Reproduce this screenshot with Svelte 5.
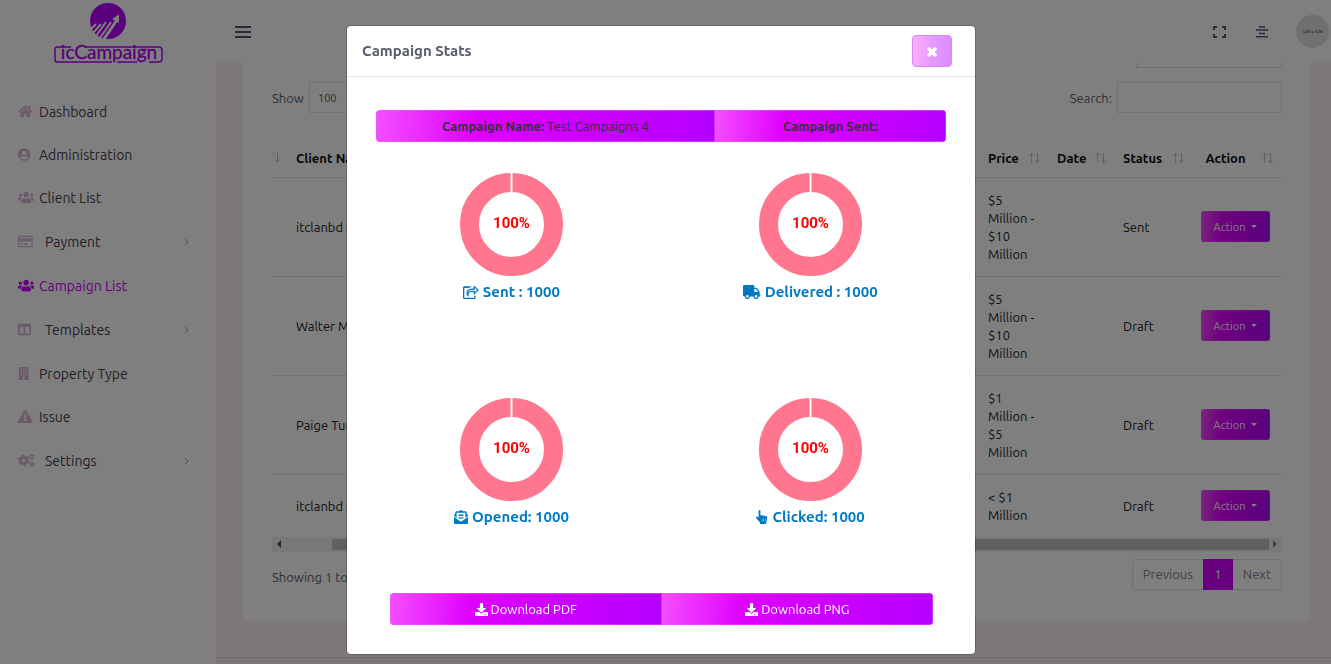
<script>
  let search = '';
  let filter = '';
  let pageSize = '100';
  let showStats = true;

  const icons = {
    home: { w: 576, d: 'M280.37 148.26L96 300.11V464a16 16 0 0 0 16 16l112.06-.29a16 16 0 0 0 15.92-16V368a16 16 0 0 1 16-16h64a16 16 0 0 1 16 16v95.64a16 16 0 0 0 16 16.05L464 480a16 16 0 0 0 16-16V300L295.67 148.26a12.19 12.19 0 0 0-15.3 0zM571.6 251.47L488 182.56V44.05a12 12 0 0 0-12-12h-56a12 12 0 0 0-12 12v72.61L318.47 43a48 48 0 0 0-61 0L4.34 251.47a12 12 0 0 0-1.6 16.9l25.5 31A12 12 0 0 0 45.15 301l235.22-193.74a12.19 12.19 0 0 1 15.3 0L530.9 301a12 12 0 0 0 16.9-1.6l25.5-31a12 12 0 0 0-1.7-16.93z' },
    user: { w: 496, d: 'M248 8C111 8 0 119 0 256s111 248 248 248 248-111 248-248S385 8 248 8zm0 96c48.6 0 88 39.4 88 88s-39.4 88-88 88-88-39.4-88-88 39.4-88 88-88zm0 344c-58.7 0-111.3-26.6-146.5-68.2 18.8-35.4 55.6-59.8 98.5-59.8 2.4 0 4.8.4 7.1 1.1 13 4.2 26.6 6.9 40.9 6.9 14.3 0 28-2.7 40.9-6.9 2.3-.7 4.7-1.1 7.1-1.1 42.9 0 79.7 24.4 98.5 59.8C359.3 421.4 306.7 448 248 448z' },
    users: { w: 640, d: 'M96 224c35.3 0 64-28.7 64-64s-28.7-64-64-64-64 28.7-64 64 28.7 64 64 64zm448 0c35.3 0 64-28.7 64-64s-28.7-64-64-64-64 28.7-64 64 28.7 64 64 64zm32 32h-64c-17.6 0-33.5 7.1-45.1 18.6 40.3 22.1 68.9 62 75.1 109.4h66c17.7 0 32-14.3 32-32v-32c0-35.3-28.7-64-64-64zm-256 0c61.9 0 112-50.1 112-112S381.9 32 320 32 208 82.1 208 144s50.1 112 112 112zm76.8 32h-8.3c-20.8 10-43.9 16-68.5 16s-47.6-6-68.5-16h-8.3C179.6 288 128 339.6 128 403.2V432c0 26.5 21.5 48 48 48h288c26.5 0 48-21.5 48-48v-28.8c0-63.6-51.6-115.2-115.2-115.2zm-223.7-13.4C161.5 263.1 145.6 256 128 256H64c-35.3 0-64 28.7-64 64v32c0 17.7 14.3 32 32 32h65.9c6.3-47.4 34.9-87.3 75.2-109.4z' },
    card: { w: 576, d: 'M527.9 32H48.1C21.5 32 0 53.5 0 80v352c0 26.5 21.5 48 48.1 48h479.8c26.6 0 48.1-21.5 48.1-48V80c0-26.5-21.5-48-48.1-48zM54.1 80h467.8c3.3 0 6 2.7 6 6v42H48.1V86c0-3.3 2.7-6 6-6zm467.8 352H54.1c-3.3 0-6-2.7-6-6V256h479.8v170c0 3.3-2.7 6-6 6zM192 332v40c0 6.6-5.4 12-12 12h-72c-6.6 0-12-5.4-12-12v-40c0-6.6 5.4-12 12-12h72c6.6 0 12 5.4 12 12zm192 0v40c0 6.6-5.4 12-12 12H236c-6.6 0-12-5.4-12-12v-40c0-6.6 5.4-12 12-12h136c6.6 0 12 5.4 12 12z' },
    columns: { w: 512, d: 'M464 32H48C21.49 32 0 53.49 0 80v352c0 26.51 21.49 48 48 48h416c26.51 0 48-21.49 48-48V80c0-26.51-21.49-48-48-48zM224 416H64V160h160v256zm224 0H288V160h160v256z' },
    building: { w: 448, d: 'M436 480h-20V24c0-13-11-24-24-24H56C43 0 32 11 32 24v456H12c-7 0-12 5-12 12v20h448v-20c0-7-5-12-12-12zM104 80h56v56h-56zM196 80h56v56h-56zM288 80h56v56h-56zM104 176h56v56h-56zM196 176h56v56h-56zM288 176h56v56h-56zM104 272h56v56h-56zM196 272h56v56h-56zM288 272h56v56h-56zM188 384h72v96h-72z' },
    warning: { w: 576, d: 'M569.517 440.013C587.975 472.007 564.806 512 527.94 512H48.054c-36.937 0-59.999-40.055-41.577-71.987L246.423 23.985c18.467-32.009 64.72-31.951 83.154 0l239.94 416.028zM288 354c-25.405 0-46 20.595-46 46s20.595 46 46 46 46-20.595 46-46-20.595-46-46-46zm-43.673-165.346l7.418 136c.347 6.364 5.609 11.346 11.982 11.346h48.546c6.373 0 11.635-4.982 11.982-11.346l7.418-136c.375-6.874-5.098-12.654-11.982-12.654h-63.383c-6.884 0-12.356 5.78-11.981 12.654z' },
    truck: { w: 640, d: 'M624 352h-16V243.9c0-12.7-5.1-24.9-14.1-33.9L494 110.1c-9-9-21.2-14.1-33.9-14.1H416V48c0-26.5-21.5-48-48-48H48C21.5 0 0 21.5 0 48v320c0 26.5 21.5 48 48 48h16c0 53 43 96 96 96s96-43 96-96h128c0 53 43 96 96 96s96-43 96-96h48c8.8 0 16-7.2 16-16v-32c0-8.8-7.2-16-16-16zM160 464c-26.5 0-48-21.5-48-48s21.5-48 48-48 48 21.5 48 48-21.5 48-48 48zm320 0c-26.5 0-48-21.5-48-48s21.5-48 48-48 48 21.5 48 48-21.5 48-48 48zm80-208H416V144h44.1l99.9 99.9V256z' },
    opened: { w: 512, d: 'M176 216h160c8.84 0 16-7.16 16-16v-16c0-8.84-7.16-16-16-16H176c-8.84 0-16 7.16-16 16v16c0 8.84 7.16 16 16 16zm-16 80c0 8.84 7.16 16 16 16h160c8.84 0 16-7.16 16-16v-16c0-8.84-7.16-16-16-16H176c-8.84 0-16 7.16-16 16v16zm96 121.13c-16.42 0-32.84-5.06-46.86-15.19L0 250.86V464c0 26.51 21.49 48 48 48h416c26.51 0 48-21.49 48-48V250.86L302.86 401.94c-14.02 10.12-30.44 15.19-46.86 15.19zm237.61-254.18c-8.85-6.94-17.24-13.47-29.61-22.81V96c0-26.51-21.49-48-48-48h-77.55c-3.04-2.2-5.87-4.26-9.04-6.56C312.6 29.17 279.2-.35 256 0c-23.2-.35-56.59 29.17-73.41 41.44-3.17 2.3-6 4.36-9.04 6.56H96c-26.51 0-48 21.49-48 48v44.14c-12.37 9.33-20.76 15.87-29.61 22.81A47.995 47.995 0 0 0 0 200.72v10.65l96 69.35V96h320v184.72l96-69.35v-10.65c0-14.74-6.78-28.67-18.39-37.77z' },
    pointer: { w: 448, d: 'M96 24c0-32 66-32 66 0v184c0-30 62-30 62 8 0-28 62-28 62 10 0-26 62-24 62 12 0-24 56-20 56 16v90c0 50-22 60-32 110v34c0 14-10 24-24 24H164c-14 0-24-10-24-24v-40L12 300c-30-42 26-84 58-44l26 30zM214 320v96h14v-96zM274 320v96h14v-96zM334 320v96h14v-96z' },
    share: { w: 576, d: 'M568 177L424 39c-15-14-40-4-40 18v71c-130 4-260 30-260 166 0 50 29 98 67 126 12 9 29-2 24-17-34-116 20-144 169-147v69c0 21 25 32 40 17l144-138c10-9 10-18 0-27zM432 285v-77c-140 0-242 13-262 102-4-110 108-134 262-134V96l84 95zM408 400v64H48V112h150c30-20 68-34 102-42 6-1 4-22-4-22H48C22 48 0 70 0 96v368c0 26 22 48 48 48h360c26 0 48-22 48-48v-84c0-8-48 12-48 20z' },
    download: { w: 512, d: 'M216 0h80c13.3 0 24 10.7 24 24v168h87.7c17.8 0 26.7 21.5 14.1 34.1L269.7 378.3c-7.5 7.5-19.8 7.5-27.3 0L90.1 226.1c-12.6-12.6-3.7-34.1 14.1-34.1H192V24c0-13.3 10.7-24 24-24zm296 376v112c0 13.3-10.7 24-24 24H24c-13.3 0-24-10.7-24-24V376c0-13.3 10.7-24 24-24h146.7l49 49c20.1 20.1 52.5 20.1 72.6 0l49-49H488c13.3 0 24 10.7 24 24zm-124 88a20 20 0 0 0-40 0 20 20 0 0 0 40 0zm64 0a20 20 0 0 0-40 0 20 20 0 0 0 40 0z' }
  };

  const menu = [
    { label: 'Dashboard', icon: 'home' },
    { label: 'Administration', icon: 'user' },
    { label: 'Client List', icon: 'users' },
    { label: 'Payment', icon: 'card', children: true },
    { label: 'Campaign List', icon: 'users', active: true },
    { label: 'Templates', icon: 'columns', children: true },
    { label: 'Property Type', icon: 'building' },
    { label: 'Issue', icon: 'warning' },
    { label: 'Settings', icon: 'cogs', children: true }
  ];

  const campaigns = [
    { client: 'itclanbd Group', price: '$5\nMillion -\n$10\nMillion', status: 'Sent' },
    { client: 'Walter Mills', price: '$5\nMillion -\n$10\nMillion', status: 'Draft' },
    { client: 'Paige Turner', price: '$1\nMillion -\n$5\nMillion', status: 'Draft' },
    { client: 'itclanbd Group', price: '< $1\nMillion', status: 'Draft' }
  ];

  const stats = [
    { label: 'Sent : 1000', icon: 'share', percent: 100 },
    { label: 'Delivered : 1000', icon: 'truck', percent: 100 },
    { label: 'Opened: 1000', icon: 'opened', percent: 100 },
    { label: 'Clicked: 1000', icon: 'pointer', percent: 100 }
  ];
</script>

<style>
  :global(body) {
    margin: 0;
    background: #faeef4;
  }

  .app {
    display: grid;
    grid-template-columns: 216px 1fr;
    height: 100vh;
    overflow: hidden;
    font-family: Ubuntu, "Noto Sans", sans-serif;
    font-size: 13px;
    line-height: 18px;
    color: #47404f;
  }

  .app *,
  .overlay * {
    box-sizing: border-box;
  }

  button,
  input,
  select {
    font-family: inherit;
    color: inherit;
  }

  a {
    color: inherit;
    text-decoration: none;
  }

  svg {
    flex: none;
  }

  .icon {
    height: 13px;
    fill: currentColor;
    fill-rule: evenodd;
  }

  /* sidebar */
  .sidebar {
    background: #fff;
  }

  .logo {
    display: flex;
    justify-content: center;
    height: 90px;
  }

  .menu {
    list-style: none;
    margin: 0;
    padding: 0;
  }

  .menu a {
    display: flex;
    align-items: center;
    height: 43px;
    padding: 0 26px 0 18px;
    font-size: 14px;
  }

  .menu .parent {
    height: 45px;
  }

  .menu-icon {
    display: flex;
    width: 21px;
    color: #d8b4d4;
  }

  .parent .menu-icon {
    width: 27px;
  }

  .menu .active,
  .active .menu-icon {
    color: #cc00ff;
  }

  .arrow {
    margin-left: auto;
    stroke: #a894b0;
    fill: none;
  }

  /* top bar */
  .page {
    display: flex;
    flex-direction: column;
    min-width: 0;
  }

  .topbar {
    z-index: 1;
    flex: none;
    display: flex;
    align-items: center;
    height: 63px;
    padding: 0 2px 0 19px;
    background: #fff;
    color: #56527c;
  }

  .tools {
    display: flex;
    align-items: center;
    gap: 28px;
    margin-left: auto;
  }

  .icon-button {
    display: flex;
    padding: 0;
    border: 0;
    background: none;
  }

  .avatar {
    display: flex;
    align-items: center;
    justify-content: center;
    width: 33px;
    height: 33px;
    border-radius: 50%;
    background: #e0e0e0;
    color: #555;
    font: bold 5px "Liberation Serif", serif;
  }

  /* list */
  .card {
    flex: none;
    margin: -26px 20px 36px 27px;
    padding: 0 29px 31px;
    border-radius: 6px;
    background: #fff;
    color: #665c70;
  }

  .field {
    height: 31px;
    padding: 0 8px;
    border: 1px solid #e4e2e6;
    background: #fff;
  }

  .filter {
    display: block;
    width: 146px;
    margin-left: auto;
  }

  .controls {
    display: flex;
    justify-content: space-between;
    margin-top: 14px;
  }

  .controls label {
    display: flex;
    align-items: center;
    gap: 5px;
  }

  .controls select {
    width: 60px;
    appearance: none;
    font-size: 11px;
    background: url("data:image/svg+xml,%3Csvg xmlns='http://www.w3.org/2000/svg' viewBox='0 0 4 5'%3E%3Cpath fill='%23343a40' d='M2 0L0 2h4zm0 5L0 3h4z'/%3E%3C/svg%3E") no-repeat right 12px center / 8px 10px #fff;
  }

  .controls input {
    width: 165px;
  }

  table {
    width: 100%;
    margin-top: 26px;
    border-collapse: collapse;
    table-layout: fixed;
    color: #222;
  }

  th {
    height: 38px;
    padding: 0 0 0 12px;
    border-bottom: 1px solid #dee2e6;
    text-align: left;
    color: #111;
  }

  th div {
    display: flex;
    align-items: center;
    justify-content: space-between;
    padding-right: 5px;
  }

  th .centered {
    justify-content: center;
    gap: 15px;
  }

  td {
    padding: 13px 10px 13px 12px;
    white-space: pre-line;
  }

  tbody tr + tr td {
    border-top: 1px solid #dee2e6;
  }

  .sort {
    stroke: #c4c0c8;
    fill: none;
  }

  .first,
  .client {
    padding-left: 0;
  }

  .gradient {
    border: 1px solid rgba(240, 90, 255, 0.5);
    background: linear-gradient(95deg, #f44fff 0%, #df00ff 30%, #b400ff 100%) border-box;
  }

  .action {
    display: flex;
    align-items: center;
    justify-content: center;
    gap: 6px;
    width: 69px;
    height: 31px;
    padding: 0;
    border-color: rgba(240, 90, 255, 0.3);
    border-radius: 3px;
    font-size: 11px;
    color: #fff;
  }

  .scrollbar {
    display: flex;
    align-items: center;
    gap: 4px;
    height: 15px;
    padding: 0 4px;
    background: #f1f1f1;
  }

  .track {
    flex: 1;
    height: 11px;
    padding-left: 47px;
  }

  .thumb {
    height: 11px;
    background: #c1c1c1;
  }

  .card-footer {
    display: flex;
    justify-content: space-between;
    align-items: center;
    margin-top: 7px;
  }

  .entries {
    padding-top: 5px;
  }

  .pagination {
    display: flex;
    border: 1px solid #dee2e6;
    border-radius: 4px;
    color: #8a8094;
  }

  .pagination button {
    height: 29px;
    padding: 0 10px;
    border: 0;
    background: none;
    font-size: 13px;
  }

  .pagination .current {
    width: 30px;
    height: 31px;
    margin: -1px 0;
    background: #cc00ff;
    color: #fff;
  }

  .page-footer {
    border-top: 1px solid #e2d6dc;
  }

  /* modal */
  .overlay {
    position: fixed;
    inset: 0;
    z-index: 10;
    padding: 26px 9px 10px 0;
    background: rgba(0, 0, 0, 0.5);
    font-family: Ubuntu, "Noto Sans", sans-serif;
    font-size: 13px;
    line-height: 18px;
    color: #333;
  }

  .modal {
    max-width: 628px;
    margin: 0 auto;
    border-radius: 4px;
    background: #fff;
    box-shadow: 0 0 0 1px rgba(0, 0, 0, 0.2);
  }

  .modal-header {
    display: flex;
    align-items: center;
    justify-content: space-between;
    height: 51px;
    padding: 0 23px 0 15px;
    border-bottom: 1px solid #dee2e6;
  }

  h5 {
    margin: 0;
    font-size: 15px;
    color: #585c6b;
  }

  .close {
    display: flex;
    align-items: center;
    justify-content: center;
    width: 40px;
    height: 32px;
    padding: 2px 0 0;
    border: 1px solid #d985fc;
    border-radius: 4px;
    background: linear-gradient(95deg, #fab0ff, #e69afc 50%, #d98cff);
  }

  .modal-body {
    padding: 33px 15px 29px;
  }

  .group {
    display: flex;
    border-radius: 4px;
    overflow: hidden;
  }

  .group > * {
    display: flex;
    align-items: center;
    justify-content: center;
    gap: 3px;
    height: 32px;
    padding: 0;
    font-size: 13px;
    white-space: pre;
  }

  .summary {
    margin: 0 14px 31px;
  }

  .name {
    flex: 339;
  }

  .sent {
    flex: 231;
  }

  .downloads {
    margin: 64px 27px 0 28px;
  }

  .downloads button {
    flex: 1;
    color: #fff;
  }

  .stats {
    display: grid;
    grid-template-columns: 1fr 1fr;
    row-gap: 94px;
  }

  .stat {
    display: flex;
    flex-direction: column;
    align-items: center;
    gap: 4px;
  }

  .stat text {
    font: bold 15px Roboto, sans-serif;
    fill: #f00;
    text-anchor: middle;
  }

  .stat p {
    display: flex;
    align-items: center;
    gap: 4px;
    height: 24px;
    margin: 0;
    font-size: 15px;
    font-weight: bold;
    color: #0079c4;
  }

  .stat p .icon {
    height: 14px;
  }
</style>

{#snippet icon(name)}
  <svg class="icon" viewBox="0 0 {icons[name].w} 512" aria-hidden="true"><path d={icons[name].d} /></svg>
{/snippet}

{#snippet cogs()}
  <svg width="17" height="13" viewBox="0 0 17 13" fill="none" stroke="currentColor" aria-hidden="true">
    <circle cx="5.7" cy="6.5" r="3.1" stroke-width="2.8" />
    <circle cx="5.7" cy="6.5" r="4.8" stroke-width="1.8" stroke-dasharray="2.8 2.23" />
    <circle cx="13.8" cy="3" r="1.6" stroke-width="1.4" />
    <circle cx="13.8" cy="3" r="2.5" stroke-width="0.8" stroke-dasharray="1.3 1.32" />
    <circle cx="13.8" cy="10" r="1.6" stroke-width="1.4" />
    <circle cx="13.8" cy="10" r="2.5" stroke-width="0.8" stroke-dasharray="1.3 1.32" />
  </svg>
{/snippet}

{#snippet sort()}
  <svg class="sort" width="12" height="12" viewBox="0 0 12 12" aria-hidden="true">
    <path d="M3.5 11V1M1 3.5L3.5 1L6 3.5M9.5 1v10M7.5 8.5l2 2.5l2-2.5" />
  </svg>
{/snippet}

<div class="app">
  <aside class="sidebar">
    <a class="logo" href="#home" aria-label="icCampaign">
      <svg width="110" height="68" viewBox="0 0 110 68">
        <circle cx="55" cy="21" r="18" fill="#b400ff" />
        <g stroke="#fff" fill="none">
          <path d="M37 30L43 24M40 33L48 24M43 36L53 22M47 38L58 22" stroke-width="2" />
          <path d="M51 39L64 20" stroke-width="3" />
        </g>
        <path d="M59 19L66 14.5L66 23z" fill="#fff" />
        <path d="M18 47H4Q2 47 2 50V59Q2 62 4 62H59M32 47H106Q109 47 109 50V59Q109 62 106 62H96M64 62H84" fill="none" stroke="#b400ff" stroke-width="1.5" />
        <text x="56" y="59" text-anchor="middle" font-family="Lato, sans-serif" font-size="19" fill="#b400ff" stroke="#b400ff" stroke-width="0.3">icCampaign</text>
      </svg>
    </a>
    <ul class="menu">
      {#each menu as item}
        <li>
          <a href="#{item.label}" class:active={item.active} class:parent={item.children}>
            <span class="menu-icon">
              {#if item.icon === 'cogs'}{@render cogs()}{:else}{@render icon(item.icon)}{/if}
            </span>
            {item.label}
            {#if item.children}
              <svg class="arrow" width="7" height="8" viewBox="0 0 7 8"><path d="M2 1l3 3l-3 3" /></svg>
            {/if}
          </a>
        </li>
      {/each}
    </ul>
  </aside>

  <div class="page">
    <header class="topbar">
      <button class="icon-button" aria-label="Toggle menu">
        <svg width="16" height="12" viewBox="0 0 16 12" stroke="currentColor" stroke-width="2"><path d="M0 1h16M0 6h16M0 11h16" /></svg>
      </button>
      <div class="tools">
        <button class="icon-button" aria-label="Full screen">
          <svg width="16" height="12" viewBox="0 0 16 12" fill="none" stroke="currentColor" stroke-width="2"><path d="M2 4V1h3M10 1h3v3M13 8v3h-3M5 11h-3V8" /></svg>
        </button>
        <button class="icon-button" aria-label="Notifications">
          <svg width="12" height="12" viewBox="0 0 12 12" stroke="currentColor" stroke-width="1.6"><path d="M3 1h6M0 4h12M3 7.5h6M0 10.8h12" /></svg>
        </button>
        <span class="avatar">128 x 128</span>
      </div>
    </header>

    <main class="card">
      <input class="field filter" aria-label="Filter" bind:value={filter} />
      <div class="controls">
        <label>
          Show
          <select class="field" bind:value={pageSize}>
            <option>100</option>
          </select>
        </label>
        <label>
          Search:
          <input class="field" bind:value={search} />
        </label>
      </div>

      <table>
        <colgroup>
          <col style="width: 24px" />
          <col />
          <col style="width: 69px" />
          <col style="width: 66px" />
          <col style="width: 78px" />
          <col style="width: 93px" />
        </colgroup>
        <thead>
          <tr>
            <th class="first">
              <svg class="sort" width="8" height="12" viewBox="4 0 8 12"><path d="M3.5 1L6 3.5M9.5 1v10M7.5 8.5l2 2.5l2-2.5" /></svg>
            </th>
            <th class="client">Client Name</th>
            <th><div>Price {@render sort()}</div></th>
            <th><div>Date {@render sort()}</div></th>
            <th><div>Status {@render sort()}</div></th>
            <th><div class="centered">Action {@render sort()}</div></th>
          </tr>
        </thead>
        <tbody>
          {#each campaigns as row}
            <tr>
              <td></td>
              <td class="client">{row.client}</td>
              <td>{row.price}</td>
              <td></td>
              <td>{row.status}</td>
              <td>
                <button class="action gradient">
                  Action
                  <svg width="6" height="3" viewBox="0 0 6 3" fill="#fff"><path d="M0 0h6L3 3z" /></svg>
                </button>
              </td>
            </tr>
          {/each}
        </tbody>
      </table>
      <div class="scrollbar">
        <svg width="5" height="8" viewBox="0 0 5 8" fill="#505050"><path d="M5 0v8L1 4z" /></svg>
        <div class="track"><div class="thumb"></div></div>
        <svg width="5" height="8" viewBox="0 0 5 8" fill="#808080"><path d="M0 0v8l4-4z" /></svg>
      </div>

      <div class="card-footer">
        <span class="entries">Showing 1 to 4 of 4 entries</span>
        <nav class="pagination" aria-label="Pages">
          <button>Previous</button>
          <button class="current">1</button>
          <button>Next</button>
        </nav>
      </div>
    </main>
    <footer class="page-footer"></footer>
  </div>
</div>

{#if showStats}
  <div class="overlay">
    <div class="modal" role="dialog" aria-labelledby="stats-title">
      <div class="modal-header">
        <h5 id="stats-title">Campaign Stats</h5>
        <button class="close" aria-label="Close" on:click={() => (showStats = false)}>
          <svg width="10" height="10" viewBox="0 0 10 10" stroke="#fff" stroke-width="3.4"><path d="M1 1l8 8M9 1l-8 8" /></svg>
        </button>
      </div>
      <div class="modal-body">
        <div class="group summary">
          <div class="name gradient"><b>Campaign Name:</b>Test Campaigns 4</div>
          <div class="sent gradient"><b>Campaign Sent:</b></div>
        </div>

        <div class="stats">
          {#each stats as stat}
            <div class="stat">
              <svg width="103" height="103" viewBox="0 0 103 103">
                <circle cx="51.5" cy="51.5" r="42" fill="none" stroke="#ff768e" stroke-width="19" />
                <path d="M51.5 0v20" stroke="#fff" stroke-width="2" />
                <text x="51.5" y="55">{stat.percent}%</text>
              </svg>
              <p>{@render icon(stat.icon)}{stat.label}</p>
            </div>
          {/each}
        </div>

        <div class="group downloads">
          <button class="gradient">{@render icon('download')}Download PDF</button>
          <button class="gradient">{@render icon('download')}Download PNG</button>
        </div>
      </div>
    </div>
  </div>
{/if}
